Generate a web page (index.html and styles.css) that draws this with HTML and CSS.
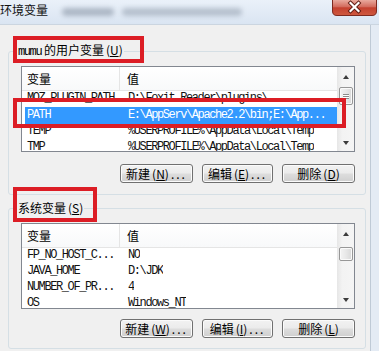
FILE: index.html
```html
<!DOCTYPE html>
<html lang="zh-CN">
<head>
<meta charset="utf-8">
<title>环境变量</title>
<link rel="stylesheet" href="styles.css">
</head>
<body>
<div class="window">
  <div class="titlebar">
    <span class="title">环境变量</span>
    <div class="smear smear-a"></div>
    <div class="smear smear-b"></div>
    <div class="close">
      <svg width="45" height="16" viewBox="0 0 45 16">
        <defs>
          <linearGradient id="cg" x1="0" y1="0" x2="0" y2="1">
            <stop offset="0" stop-color="#e9a99d"/>
            <stop offset="0.45" stop-color="#d2695b"/>
            <stop offset="0.5" stop-color="#c4402f"/>
            <stop offset="1" stop-color="#cf5a3f"/>
          </linearGradient>
        </defs>
        <path d="M0.5 0 V11 Q0.5 15.5 5 15.5 H40 Q44.5 15.5 44.5 11 V0" fill="url(#cg)" stroke="#7d2a20" stroke-width="1"/>
        <path d="M18.5 3 L26.5 11 M26.5 3 L18.5 11" stroke="#5b1810" stroke-width="4" stroke-linecap="square"/>
        <path d="M18.5 3 L26.5 11 M26.5 3 L18.5 11" stroke="#ffffff" stroke-width="2.2" stroke-linecap="square"/>
      </svg>
    </div>
  </div>

  <div class="content">
    <fieldset class="group group-user">
      <legend class="legend"><span class="mono">mumu</span> 的用户变量<span class="key">(<u>U</u>)</span></legend>
      <div class="list">
        <div class="rows">
          <div class="head"><span class="hc1">变量</span><span class="hc2">值</span></div>
          <div class="row"><span class="c1">MOZ_PLUGIN_PATH</span><span class="c2">D:\Foxit Reader\plugins\</span></div>
          <div class="row sel"><span class="c1">PATH</span><span class="c2">E:\AppServ\Apache2.2\bin;E:\App...</span></div>
          <div class="row"><span class="c1">TEMP</span><span class="c2">%USERPROFILE%\AppData\Local\Temp</span></div>
          <div class="row"><span class="c1">TMP</span><span class="c2">%USERPROFILE%\AppData\Local\Temp</span></div>
        </div>
        <div class="sb">
          <div class="sb-btn"><span class="arrow-up"></span></div>
          <div class="thumb thumb-user"><span class="grip"></span></div>
          <div class="sb-btn sb-down"><span class="arrow-down"></span></div>
        </div>
      </div>
      <div class="buttons">
        <button class="btn wide">新建<span class="key">(<u>N</u>)</span><span class="dots">...</span></button>
        <button class="btn">编辑<span class="key">(<u>E</u>)</span><span class="dots">...</span></button>
        <button class="btn wide">删除<span class="key">(<u>D</u>)</span></button>
      </div>
    </fieldset>

    <fieldset class="group group-sys">
      <legend class="legend">系统变量<span class="key">(<u>S</u>)</span></legend>
      <div class="list">
        <div class="rows">
          <div class="head"><span class="hc1">变量</span><span class="hc2">值</span></div>
          <div class="row"><span class="c1">FP_NO_HOST_C...</span><span class="c2">NO</span></div>
          <div class="row"><span class="c1">JAVA_HOME</span><span class="c2">D:\JDK</span></div>
          <div class="row"><span class="c1">NUMBER_OF_PR...</span><span class="c2">4</span></div>
          <div class="row"><span class="c1">OS</span><span class="c2">Windows_NT</span></div>
        </div>
        <div class="sb">
          <div class="sb-btn"><span class="arrow-up"></span></div>
          <div class="thumb thumb-sys"></div>
          <div class="sb-btn sb-down"><span class="arrow-down"></span></div>
        </div>
      </div>
      <div class="buttons">
        <button class="btn wide">新建<span class="key">(<u>W</u>)</span><span class="dots">...</span></button>
        <button class="btn">编辑<span class="key">(<u>I</u>)</span><span class="dots">...</span></button>
        <button class="btn wide">删除<span class="key">(<u>L</u>)</span></button>
      </div>
    </fieldset>
  </div>

  <div class="mark mark-user"></div>
  <div class="mark mark-path"></div>
  <div class="mark mark-sys"></div>
</div>
</body>
</html>
```

FILE: styles.css
```css
* { box-sizing: border-box; }

html, body {
  margin: 0;
  padding: 0;
}

body {
  width: 379px;
  height: 351px;
  overflow: hidden;
  background: #e4ebf4;
  font-family: "Noto Sans CJK SC", "Liberation Sans", sans-serif;
  font-size: 12px;
  color: #000;
}

.window {
  position: relative;
  width: 379px;
  height: 351px;
  display: flex;
  flex-direction: column;
  background: #e4ebf4;
}

/* ---------- title bar ---------- */
.titlebar {
  flex: none;
  height: 25px;
  display: flex;
  align-items: flex-start;
  background: linear-gradient(#eaf1f9, #dae5f2);
  border-bottom: 1px solid #cbd5e0;
}

.title {
  font-size: 12px;
  line-height: 14px;
  padding-top: 3px;
  color: #101010;
}

.smear {
  height: 8px;
  margin-top: 8px;
  background: #7f8c9c;
  border-radius: 4px;
  filter: blur(2.5px);
  opacity: 0.55;
}
.smear-a { width: 52px; margin-left: 14px; }
.smear-b { width: 120px; margin-left: 8px; opacity: 0.45; }

.close {
  margin-left: auto;
  margin-right: 2px;
  width: 45px;
  height: 16px;
  line-height: 0;
}

/* ---------- dialog body ---------- */
.content {
  flex: 1;
  margin-right: 8px;
  background: #f0f0f0;
  border-right: 1px solid #bfcad6;
  padding: 18px 4px 0 8px;
}

.group {
  margin: 0;
  min-width: 0;
  border: 1px solid #d5dfe5;
  border-radius: 3px;
  padding: 7px 10px 11px 12px;
}

.group-sys {
  margin-top: 6px;
  padding-top: 8px;
  padding-bottom: 10px;
}

.legend {
  margin-left: -4px;
  padding: 0 1px;
  font-size: 12px;
  line-height: 14px;
}

.key {
  margin-left: 2px;
}

.legend u,
.btn u {
  text-underline-offset: 1px;
}

.mono {
  font-family: "Liberation Mono", monospace;
  font-size: 12px;
  letter-spacing: -1.4px;
}

/* ---------- list view ---------- */
.list {
  display: flex;
  height: 86px;
  border: 1px solid #828790;
  background: #fff;
  overflow: hidden;
}

.rows {
  flex: 1;
  min-width: 0;
  overflow: hidden;
}

.head {
  display: flex;
  height: 24px;
  border-bottom: 1px solid #e5e5e5;
  background: linear-gradient(#ffffff, #f8f9fa);
  font-size: 12px;
  line-height: 23px;
}

.hc1 {
  width: 98px;
  padding-left: 5px;
  border-right: 1px solid #e5e5e5;
}

.hc2 {
  padding-left: 7px;
}

.row {
  display: flex;
  height: 16px;
  line-height: 15px;
  font-family: "Liberation Mono", "Noto Sans CJK SC", monospace;
  font-size: 12px;
  letter-spacing: -1.4px;
  color: #111;
  white-space: nowrap;
}

.c1 {
  flex: none;
  width: 98px;
  padding-left: 5px;
  overflow: hidden;
}

.c2 {
  padding-left: 8px;
  overflow: hidden;
}

.row.sel {
  margin-left: 3px;
  height: 17px;
  line-height: 17px;
  background: #3399ff;
  color: #fff;
}

.row.sel .c1 {
  width: 95px;
  padding-left: 2px;
}

/* ---------- scrollbar ---------- */
.sb {
  flex: none;
  width: 17px;
  display: flex;
  flex-direction: column;
  background: linear-gradient(to right, #e6e6e6, #f3f3f3 30%, #f5f5f5);
}

.sb-btn {
  flex: none;
  height: 17px;
  display: flex;
  align-items: center;
  justify-content: center;
}

.sb-down {
  margin-top: auto;
}

.arrow-up {
  width: 0;
  height: 0;
  margin-top: 2px;
  border-left: 3.5px solid transparent;
  border-right: 3.5px solid transparent;
  border-bottom: 4px solid #3c3c3c;
}

.arrow-down {
  width: 0;
  height: 0;
  border-left: 3.5px solid transparent;
  border-right: 3.5px solid transparent;
  border-top: 4px solid #3c3c3c;
}

.thumb {
  flex: none;
  margin: 3px 1px 0 2px;
  border: 1px solid #979797;
  border-radius: 2px;
  background: linear-gradient(to right, #f4f4f4, #e8e8e8 50%, #d8d8d8);
  box-shadow: inset 0 0 0 1px #fafafa;
  display: flex;
  align-items: center;
  justify-content: center;
}

.thumb-user { height: 18px; }
.thumb-sys { height: 14px; margin-top: 6px; }

.grip {
  width: 6px;
  height: 5px;
  border-top: 1px solid #8a8a8a;
  border-bottom: 1px solid #8a8a8a;
  background: linear-gradient(#fff 0 1px, #8a8a8a 1px 2px, transparent 2px);
  background-size: 100% 2px;
}

/* ---------- buttons ---------- */
.buttons {
  display: flex;
  justify-content: flex-end;
  gap: 9px;
  margin-top: 12px;
}

.group-sys .buttons {
  margin-top: 10px;
}

.btn {
  width: 71px;
  height: 19px;
  padding: 0;
  border: 1px solid #707070;
  border-radius: 3px;
  background: linear-gradient(#f2f2f2 0%, #ebebeb 48%, #dddddd 52%, #cfcfcf 100%);
  box-shadow: inset 0 0 0 1px #fbfbfb;
  font-family: "Noto Sans CJK SC", "Liberation Sans", sans-serif;
  font-size: 12px;
  line-height: 16px;
  color: #000;
  text-align: center;
  white-space: nowrap;
}

.btn.wide {
  width: 73px;
}

.dots {
  letter-spacing: 2px;
  margin-left: 2px;
}

/* ---------- annotation overlays ---------- */
.mark {
  position: absolute;
  border: 4px solid #dc1d25;
}

.mark-user { left: 13px; top: 36px; width: 131px; height: 27px; }
.mark-path { left: 13px; top: 98px; width: 333px; height: 30px; }
.mark-sys  { left: 13px; top: 187px; width: 84px; height: 35px; }
```
